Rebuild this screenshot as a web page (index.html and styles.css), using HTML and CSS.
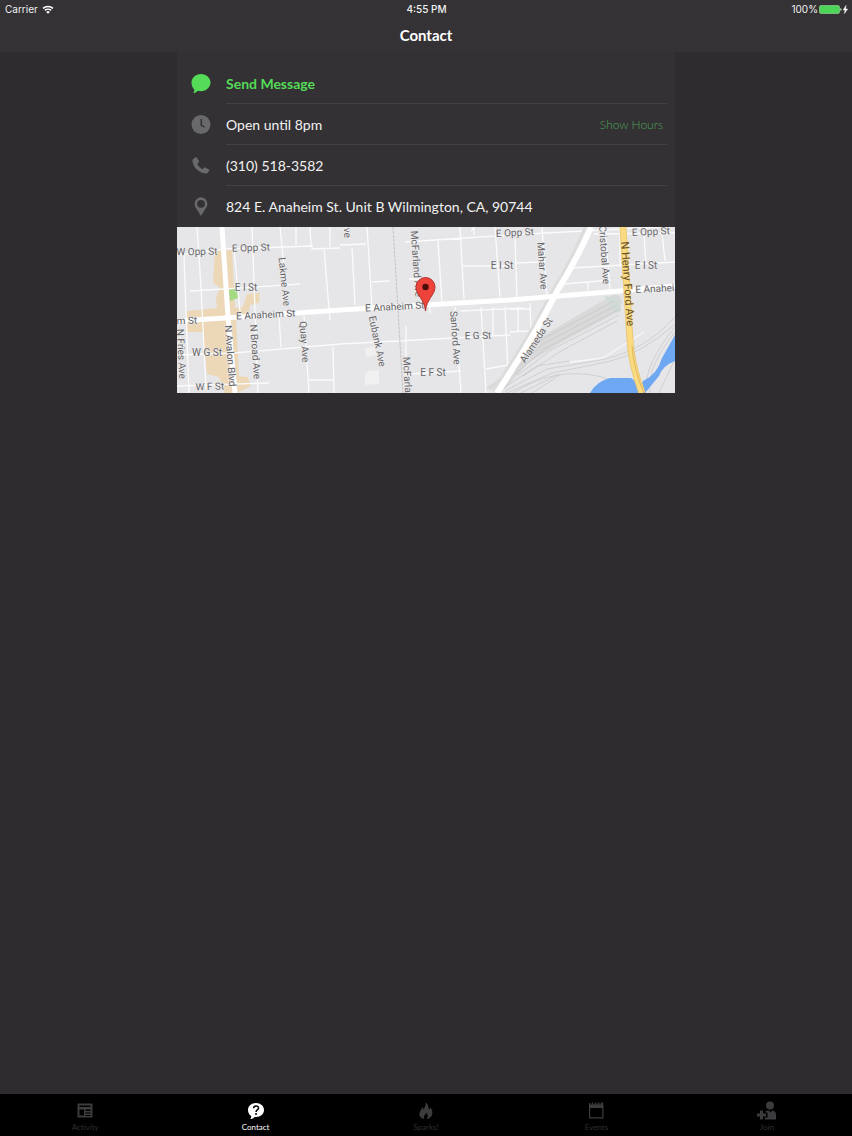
FILE: index.html
```html
<!DOCTYPE html>
<html lang="en">
<head>
  <meta charset="UTF-8">
  <meta name="viewport" content="width=device-width, initial-scale=1.0">
  <title>Contact</title>
  <link rel="stylesheet" href="styles.css">
</head>
<body>
  <header class="top">
    <div class="status-bar">
      <div class="carrier">
        <span>Carrier</span>
        <svg width="12" height="9" viewBox="0 0 12 9" fill="none" stroke="#fff" stroke-width="1.5">
          <path d="M1 3.4a7.2 7.2 0 0 1 10 0M2.9 5.4a4.5 4.5 0 0 1 6.2 0"/>
          <path d="M6 8.8L4.2 6.9a2.6 2.6 0 0 1 3.6 0z" fill="#fff" stroke="none"/>
        </svg>
      </div>
      <div class="time">4:55 PM</div>
      <div class="battery">
        <span>100%</span>
        <svg width="29" height="9" viewBox="0 0 29 9">
          <rect x="0.5" y="0.5" width="20" height="8" rx="1.5" fill="#4cd557" stroke="#9bdc9f" stroke-width="0.6"/>
          <path d="M21.3 3v3q1.2-.4 1.2-1.5T21.3 3z" fill="#b8e8ba"/>
          <path d="M27 .5L24.200 5h2L25.400 8.500 28.600 4h-2.100z" fill="#fff" stroke="#fff" stroke-width="0.5"/>
        </svg>
      </div>
    </div>
    <h1>Contact</h1>
  </header>

  <main class="panel">
    <ul class="contact-list">
      <li>
        <svg class="icon message" viewBox="0 0 20 20">
          <path d="M10 0c5.300 0 9.500 3.800 9.500 8.600s-4.200 8.600-9.500 8.600c-1.200 0-2.300-.2-3.300-.5-1.100 1.500-2.700 2.300-4.400 2.400.8-1 1.200-2.200 1-3.500C1.600 14 .5 11.500.5 8.600.5 3.800 4.700 0 10 0z"/>
        </svg>
        <a class="row send" href="#">Send Message</a>
      </li>
      <li>
        <svg class="icon" viewBox="0 0 20 20">
          <circle cx="10" cy="9.500" r="9.500"/>
          <path d="M10.300 4v6.300l3.200 1.800" fill="none" stroke="#333134" stroke-width="1.500"/>
        </svg>
        <div class="row">
          <span>Open until 8pm</span>
          <button type="button" class="hours">Show Hours</button>
        </div>
      </li>
      <li>
        <svg class="icon" viewBox="0 0 20 20">
          <path d="M2 3.300L4.700 1.300q.7-.4 1.200.3L8 5.200q.3.700-.3 1.200L6.200 7.700c1.200 2.500 3 4.300 5.500 5.500l1.500-1.600q.5-.6 1.200-.2l3.600 2.200q.6.500.2 1.200l-1.900 2.400q-.6.500-1.500.4C7.500 16.700 2.100 11.300 1.400 4.500q0-.8.600-1.200z"/>
        </svg>
        <a class="row" href="tel:3105183582">(310) 518-3582</a>
      </li>
      <li>
        <svg class="icon" viewBox="0 0 20 20">
          <path fill-rule="evenodd" d="M10 .3a6.400 6.400 0 0 1 6.400 6.400c0 3.800-3.700 7-6.400 12.300C7.300 13.700 3.600 10.500 3.600 6.700A6.400 6.400 0 0 1 10 .3zm0 2.600a3.900 3.900 0 1 0 0 7.800 3.900 3.900 0 0 0 0-7.800z"/>
        </svg>
        <a class="row" href="#map">824 E. Anaheim St. Unit B Wilmington, CA, 90744</a>
      </li>
    </ul>

    <svg class="map" id="map" viewBox="0 0 498 166" role="img" aria-label="Map of 824 E. Anaheim St.">
      <rect width="498" height="166" fill="#e6e5e7"/>

      <!-- business district and park -->
      <path class="shops" d="M38 23h17l3 58 8-1 4-13 13-1-1 10-9 2-2 13h-12l3 58 9 1 3 9-14 7H48l-6-16-12-3-4-42H10V84l30-3-1-11 4-9-7-6z"/>
      <path d="M52 62h8l1 9-8 3z" fill="#a5da83"/>

      <!-- rail yard and blocks -->
      <path d="M337 141l24-29 30-18 45-26q8-2 9 7l-2 9-56 30-36 22-23 26h-20z" fill="#d9d9da"/>
      <path d="M427 69l10 1q7 5 7 14l-5 2z" fill="#d0dad7"/>
      <path d="M188 121l10-1 1 8-10 2zM191 144l11-1v14l-14 1v-10z" fill="#f0f0f1"/>
      <g class="rail">
        <path d="M334 143l30-30 73-39M336 145l30-28 74-39M338 147l31-26 73-39M341 148l33-25 68-35M346 149l38-25 56-30"/>
        <path d="M328 164l42-22 48-8q48-8 80-44M330 166l45-20 55-11q35-8 68-38M336 166q40-26 85-17 24 6 35 17M344 166l38-19M355 166l28-18M468 166q0-30 30-66M473 166q-4-25 25-61M482 166l16-34M322 164l38-25 32-5"/>
      </g>

      <!-- water -->
      <path class="water" d="M413 166q7-12 20-15h21l9 7 3 8zM461 166l5-12q14-6 19-23l13-23v26q-13 5-16 15l-14 17z"/>

      <!-- side streets -->
      <g class="street">
        <path d="M0 28l48-6 87-3v3l28-1M20 0l4 60 5 102M7 28l5 138M13 64l35-2 75-5M57 23l6 61M75 0l6 166M103 0l6 60M119 0v18M133 0l1 19M153 0v20M147 22l6 71M190 0l5 79M163 18l26-1M169 0l1 9M175 21l3 57M195 55l17-1"/>
        <path d="M0 128l57-2 106-9 170-9M0 159l92-3M102 90l2 30M127 89l5 77M156 120l1 46M131 153h25"/>
        <path d="M228 15l105-7 165-9M261 13l4 64M283 0l4 72M286 39h48M318 0l5 70M232 52h14M253 78v8M229 99v66M233 147l51-3M278 80l6 86M283 84l64-3M304 80l5 86M316 80v28M328 80l3 65M309 142l23-4 16-12M297 8V0l-3 4"/>
        <path d="M338 12l2 58M338 36l27-1M365 0l5 70M387 57l47-4M411 54v9M394 41l104-6M417 7l81-1M443 0v40M467 8l2 29M485 5l3 29M428 0l5 64M353 76l1 28-21 1M333 82h21M341 80v25"/>
        <path d="M393 135l33-4 41-26" stroke="#f7f7f7"/>
      </g>
      <path d="M216 0l3 50 7 116" stroke="#c3c2c5" fill="none" stroke-dasharray="3 1"/>

      <!-- main roads -->
      <path class="avenue" d="M45 0l6 90 7 76"/>
      <path d="M411 0q-14 34-34 66-22 44-59 99" fill="none" stroke="#dcdcdd" stroke-width="8"/>
      <path class="avenue wide" d="M414 0q-15 34-35 66-22 44-59 100"/>
      <path class="avenue" d="M0 94l48-3 115-8 170-10 110-9 55-5"/>
      <path d="M446 0l7 113q1 23 12 53" fill="none" stroke="#e9c97a" stroke-width="7"/>
      <path d="M446 0l7 113q1 23 12 53" fill="none" stroke="#fadb80" stroke-width="5"/>
      <path d="M455 119q2 25 12 47" fill="none" stroke="#dfb65f"/>

      <!-- street names -->
      <g class="names">
        <text transform="translate(20 28) rotate(-1)">W Opp St</text>
        <text transform="translate(74 24) rotate(-2)">E Opp St</text>
        <text transform="translate(69 64)">E I St</text>
        <text transform="translate(89 91) rotate(-3)">E Anaheim St</text>
        <text transform="translate(10 97) rotate(-2)">m St</text>
        <text transform="translate(30 129)">W G St</text>
        <text transform="translate(33 163) rotate(-2)">W F St</text>
        <text transform="translate(104 55) rotate(84)">Lakme Ave</text>
        <text transform="translate(124 115) rotate(86)">Quay Ave</text>
        <text transform="translate(75 125) rotate(86)">N Broad Ave</text>
        <text transform="translate(50 129) rotate(86)">N Avalon Blvd</text>
        <text transform="translate(1 127) rotate(87)">N Fries Ave</text>
        <text transform="translate(167 6) rotate(87)">ve</text>
        <text transform="translate(197 115) rotate(78)">Eubank Ave</text>
        <text transform="translate(236 37) rotate(86)">McFarland Ave</text>
        <text transform="translate(227 148) rotate(87)">McFarla</text>
        <text transform="translate(218 83) rotate(-3)">E Anaheim St</text>
        <text transform="translate(275 111) rotate(86)">Sanford Ave</text>
        <text transform="translate(301 112) rotate(-1)">E G St</text>
        <text transform="translate(256 149)">E F St</text>
        <text transform="translate(325 42)">E I St</text>
        <text transform="translate(338 9) rotate(-3)">E Opp St</text>
        <text transform="translate(362 39) rotate(86)">Mahar Ave</text>
        <text transform="translate(424 28) rotate(86)">Cristobal Ave</text>
        <text transform="translate(362 115) rotate(-57)">Alameda St</text>
        <text class="highway" transform="translate(447 57) rotate(86)">N Henry Ford Ave</text>
        <text transform="translate(469 42)">E I St</text>
        <text transform="translate(474 8) rotate(-3)">E Opp St</text>
        <text transform="translate(478 65) rotate(-3)">E Anahei</text>
      </g>

      <!-- location pin -->
      <path d="M248.500 84c-1-12-9.500-16-9.500-24a9.500 9.500 0 0 1 19 0c0 8-8.500 12-9.500 24z" fill="#ee433a" stroke="#b0312c"/>
      <circle cx="248.500" cy="60" r="3.200" fill="#4b0c0a"/>
    </svg>
  </main>

  <nav class="tabs">
    <a href="#">
      <svg viewBox="0 0 20 20">
        <path fill-rule="evenodd" d="M2.500 2.500h15v14h-15zm2 2v1.500h11V4.500zm0 4v6H9v-6zm6 0V10h5V8.500zm0 3v1h5v-1zm0 2.500v1h5v-1z"/>
      </svg>
      <span>Activity</span>
    </a>
    <a href="#" class="active">
      <svg viewBox="0 0 20 20">
        <path d="M10 2c4.600 0 8 3 8 7s-3.400 7-8 7l-1.500-.1C7.500 17.200 6 18 4.300 18c.7-.9 1-1.800.9-2.900C3.200 13.800 2 11.500 2 9c0-4 3.400-7 8-7z"/>
        <path d="M7.600 7.300q.1-2.300 2.500-2.300t2.400 2q0 1.100-1.300 1.900-1.100.7-1.100 2" fill="none" stroke="#000" stroke-width="1.600"/>
        <circle cx="10" cy="13" r="1" fill="#000"/>
      </svg>
      <span>Contact</span>
    </a>
    <a href="#">
      <svg viewBox="0 0 20 20">
        <path d="M9.500 1.500c3 2 2.500 4.500 4 7 .8-.6.900-1.500.8-2.500 2.300 3 3.200 7.200.4 10-1 1.200-2.500 2-4.200 2 2-2.200 1.500-4.500-.5-6.500 0 2-1.500 2.500-2 4-.3.900 0 1.800.5 2.500-3.500-.5-5.700-3-5-6 .6-2.500 2.400-3.500 2.600-6 .7.600 1 1.500 1 2.500 2-2 2.800-4.300 2.400-7z"/>
      </svg>
      <span>Sparks!</span>
    </a>
    <a href="#">
      <svg viewBox="0 0 20 20">
        <path fill-rule="evenodd" d="M3 2h1.200v1.500h1.500V1.500h1.500v2h1.600v-2h1.500v2h1.500v-2h1.500v2h1.500v-2H17V3.500h.5v14H3zm1.200 5v9.200h12.100V7z"/>
      </svg>
      <span>Events</span>
    </a>
    <a href="#">
      <svg viewBox="0 0 20 20">
        <circle cx="13" cy="4.500" r="4"/>
        <path d="M3 9.500h3v3h3v3H6v3H3v-3H0v-3h3z"/>
        <path d="M8.500 10.500q1.500-1 3-1l2 2 2-2c2.300.5 3.500 2 3.500 4.500v4.500H8v-2h2.500v-5h-2z"/>
      </svg>
      <span>Join</span>
    </a>
  </nav>
</body>
</html>
```

FILE: styles.css
```css
* {
  box-sizing: border-box;
}

body {
  margin: 0;
  min-height: 100vh;
  display: flex;
  flex-direction: column;
  font-family: Lato, sans-serif;
  background-color: #2e2c2e;
  color: #f2f2f2;
}

a {
  color: inherit;
  text-decoration: none;
}

.top {
  height: 52px;
  background-color: #343235;
}

.status-bar {
  display: grid;
  grid-template-columns: 1fr auto 1fr;
  align-items: center;
  height: 18px;
  padding: 0 4px 0 5px;
  font-family: Inter, sans-serif;
  font-size: 10px;
}

.carrier,
.battery {
  display: flex;
  align-items: center;
  gap: 4px;
}

.battery {
  justify-content: flex-end;
  gap: 1px;
}

.time {
  font-weight: 500;
}

h1 {
  margin: 7px 0 0;
  font-size: 15px;
  line-height: 20px;
  text-align: center;
  color: #fff;
}

.panel {
  width: 100%;
  max-width: 498px;
  margin: 0 auto;
  padding-top: 11px;
  background-color: #333134;
}

.contact-list {
  margin: 0;
  padding: 0;
  list-style: none;
}

.contact-list li {
  display: flex;
  align-items: center;
  height: 41px;
  padding: 0 8px 0 14px;
}

.icon {
  width: 20px;
  height: 20px;
  margin-right: 15px;
  fill: #69686b;
}

.icon.message {
  fill: #55db57;
}

.row {
  flex: 1;
  display: flex;
  align-items: center;
  justify-content: space-between;
  height: 41px;
  padding-right: 4px;
  border-bottom: 1px solid #424144;
  font-size: 14px;
}

.contact-list li:last-child .row {
  border-bottom: none;
}

.send {
  font-weight: bold;
  color: #55db57;
}

.hours {
  padding: 0;
  border: none;
  background: none;
  font-family: inherit;
  font-size: 12px;
  font-weight: 300;
  color: #4da455;
  cursor: pointer;
}

.map {
  display: block;
  width: 100%;
  height: auto;
}

.shops {
  fill: #ecd7b7;
}

.water {
  fill: #6ea8f2;
}

.rail {
  fill: none;
  stroke: #c6c6c8;
  stroke-width: 0.7;
}

.street {
  fill: none;
  stroke: #fbfbfc;
  stroke-width: 1.3;
}

.avenue {
  fill: none;
  stroke: #fff;
  stroke-width: 5;
}

.wide {
  stroke-width: 6;
}

.names {
  font-family: Roboto, sans-serif;
  font-size: 10px;
  text-anchor: middle;
  fill: #666568;
  stroke: #efeff0;
  stroke-width: 1px;
  paint-order: stroke;
}

.highway {
  font-size: 11px;
  fill: #66512e;
  stroke: #fadb80;
}

.tabs {
  display: flex;
  height: 42px;
  margin-top: auto;
  background-color: #000;
}

.tabs a {
  flex: 1;
  display: flex;
  flex-direction: column;
  align-items: center;
  padding-top: 7px;
  font-size: 8px;
  line-height: 12px;
  color: #302f31;
}

.tabs svg {
  width: 20px;
  height: 20px;
  fill: #3c3b3d;
}

.tabs .active {
  color: #fff;
}

.tabs .active svg {
  fill: #fff;
}
```
